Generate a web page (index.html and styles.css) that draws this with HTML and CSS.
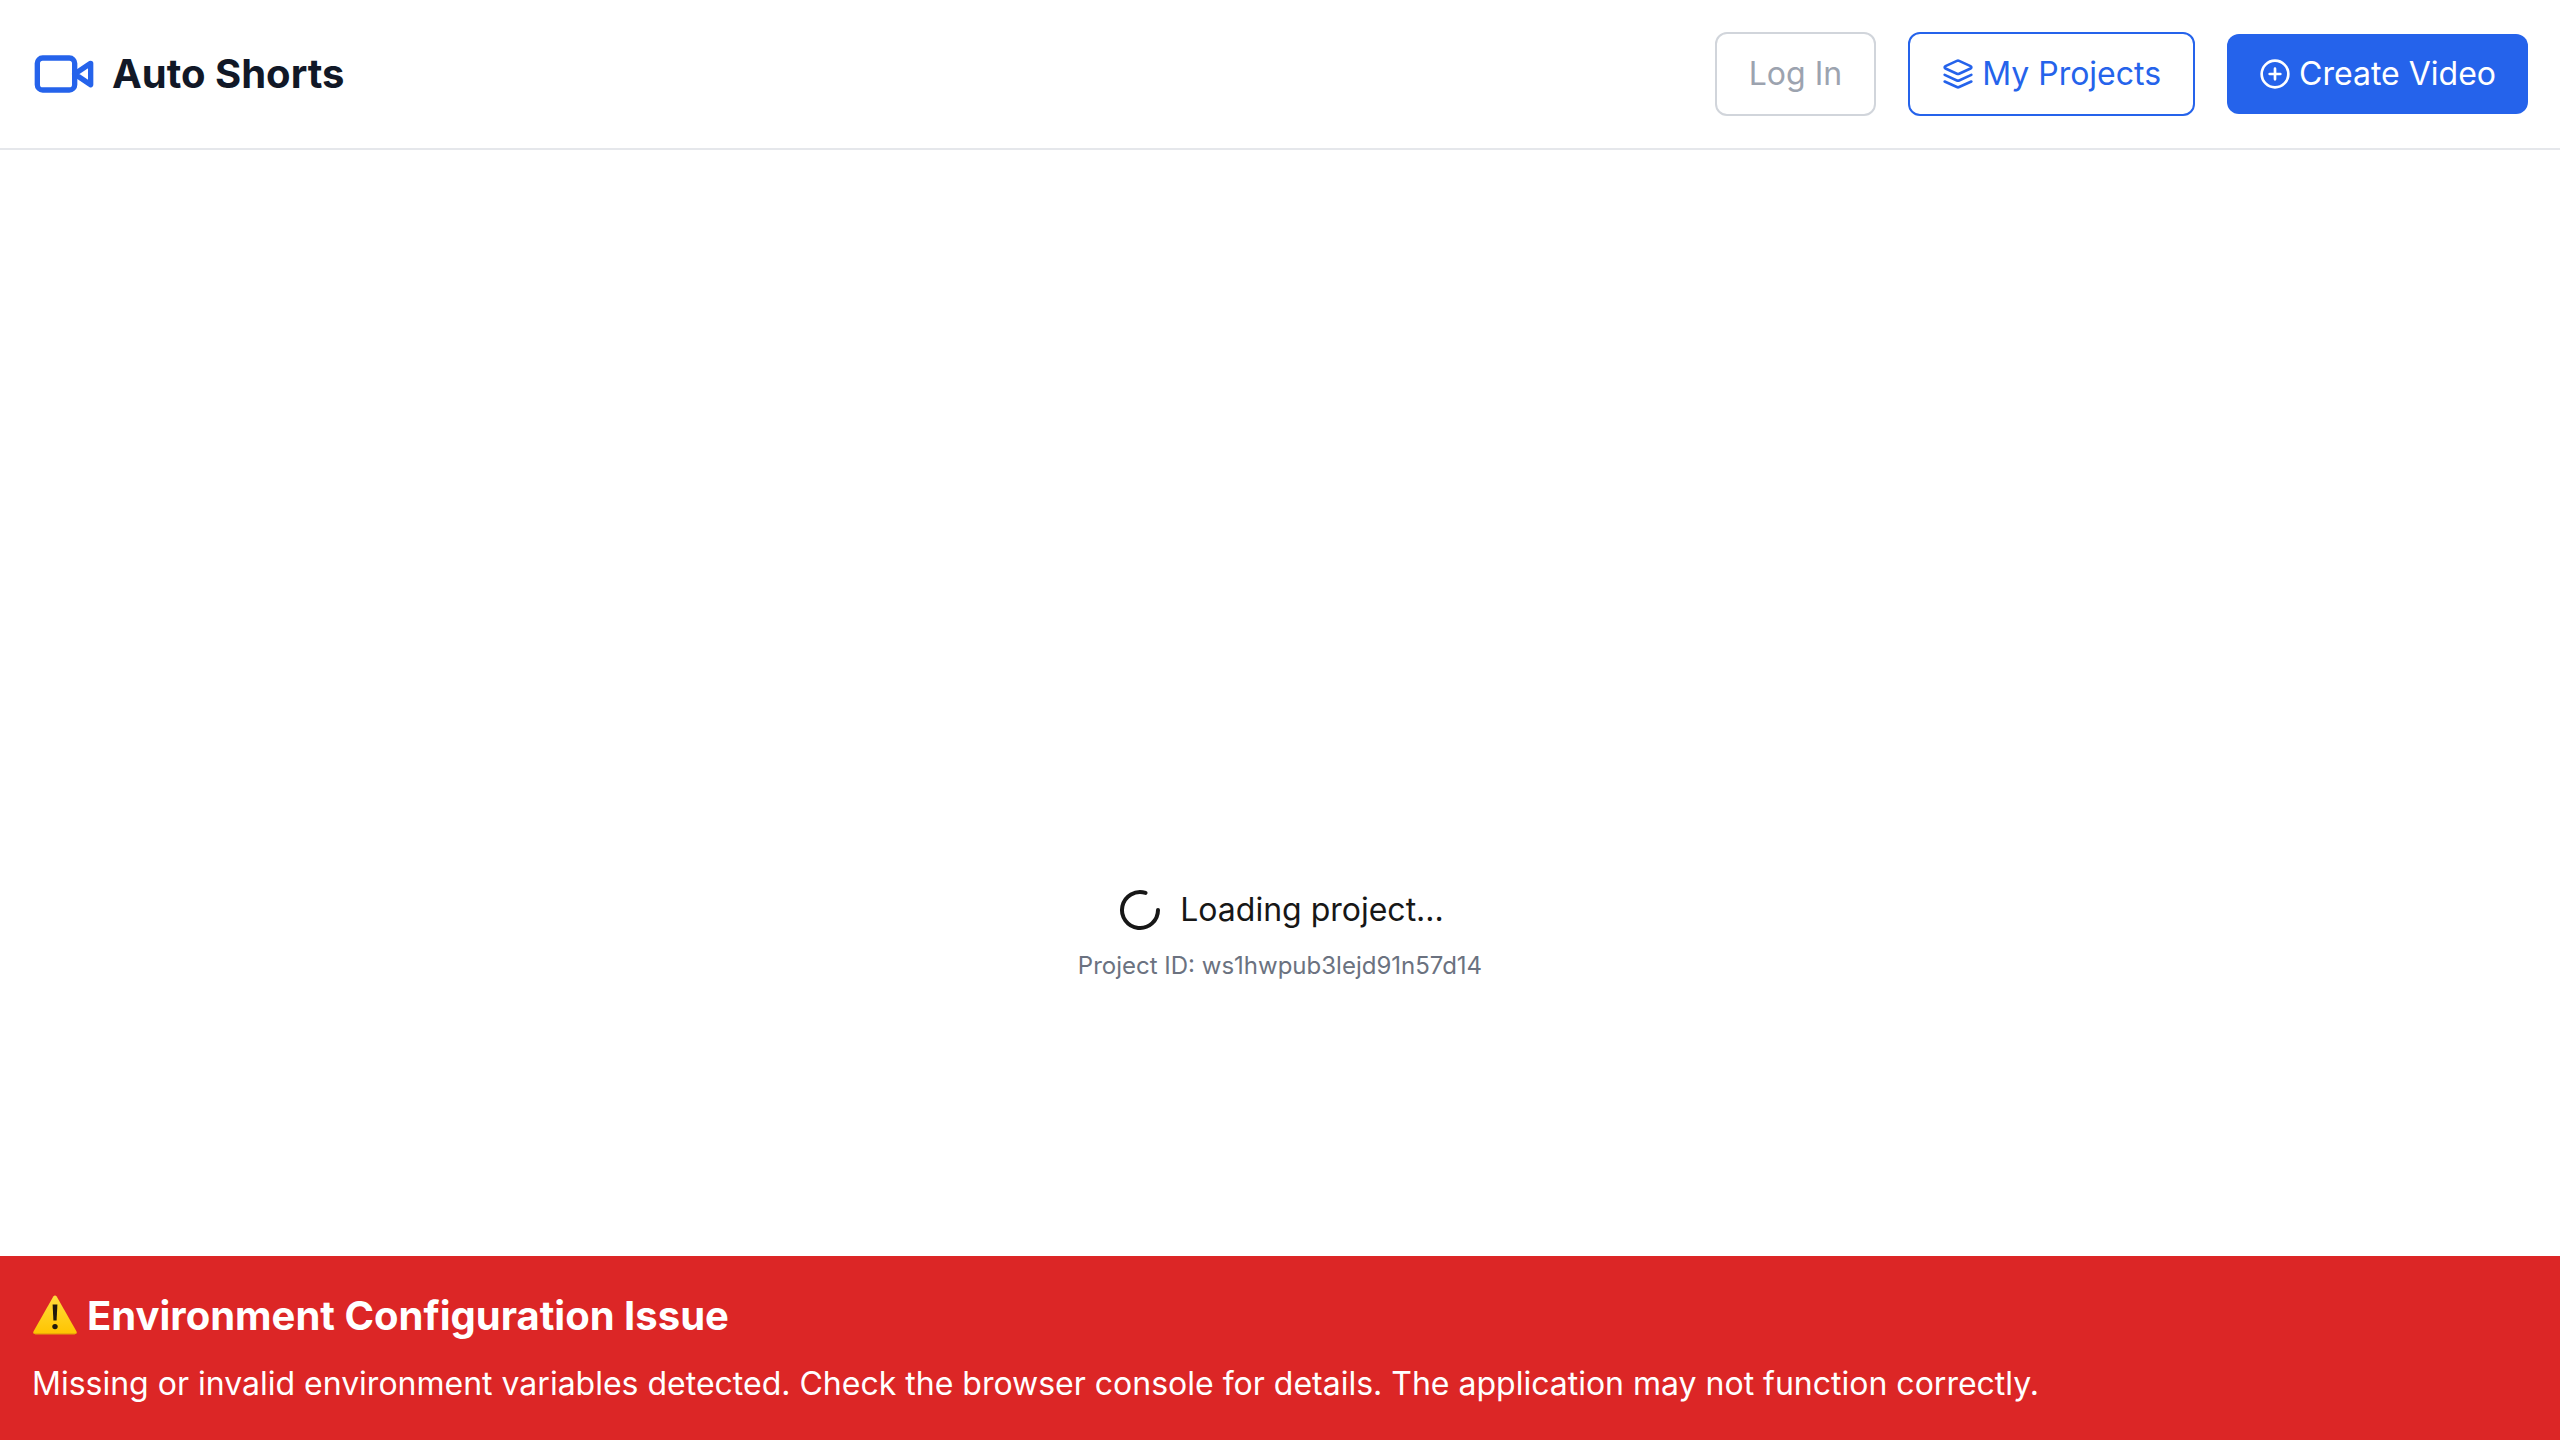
FILE: index.html
```html
<!DOCTYPE html>
<html lang="en">
<head>
<meta charset="utf-8">
<meta name="viewport" content="width=device-width, initial-scale=1">
<title>Auto Shorts</title>
<link rel="stylesheet" href="styles.css">
</head>
<body>
<div class="app">
  <header class="header">
    <a class="brand" href="#">
      <svg class="brand-icon" viewBox="0 0 24 24" aria-hidden="true"><path d="m22 8-6 4 6 4V8Z"/><rect x="2" y="6" width="14" height="12" rx="2"/></svg>
      <span>Auto Shorts</span>
    </a>
    <nav class="actions">
      <button class="button button-muted" type="button" disabled>Log In</button>
      <button class="button button-outline" type="button">
        <svg class="button-icon" viewBox="0 0 24 24" aria-hidden="true"><path d="m12.83 2.18a2 2 0 0 0-1.66 0L2.6 6.08a1 1 0 0 0 0 1.83l8.58 3.91a2 2 0 0 0 1.66 0l8.58-3.9a1 1 0 0 0 0-1.83Z"/><path d="m22 17.65-9.17 4.16a2 2 0 0 1-1.66 0L2 17.65"/><path d="m22 12.65-9.17 4.16a2 2 0 0 1-1.66 0L2 12.65"/></svg>
        My Projects
      </button>
      <button class="button button-primary" type="button">
        <svg class="button-icon" viewBox="0 0 24 24" aria-hidden="true"><circle cx="12" cy="12" r="10"/><path d="M8 12h8M12 8v8"/></svg>
        Create Video
      </button>
    </nav>
  </header>

  <main class="main">
    <div class="loading" role="status">
      <svg class="spinner" viewBox="0 0 24 24" aria-hidden="true"><path d="M21 12a9 9 0 1 1-6.219-8.56"/></svg>
      <span>Loading project...</span>
    </div>
    <p class="project-id">Project ID: ws1hwpub3lejd91n57d14</p>
  </main>

  <section class="banner" role="alert">
    <h2 class="banner-title">
      <svg class="warning" viewBox="-1 0 47 42" aria-hidden="true">
        <defs><linearGradient id="amber" x1="0" y1="0" x2="0" y2="1"><stop offset="0" stop-color="#ffdc3c"/><stop offset="1" stop-color="#ffc400"/></linearGradient></defs>
        <path d="M20.3 1.6Q22-.8 23.7 1.6L43.4 36.2Q44.6 39.2 41.8 39.2H2.2Q-.6 39.2.6 36.2Z" fill="url(#amber)"/>
        <path d="M.6 37.2Q.6 39.2 2.6 39.2H41.4Q43.4 39.2 43.4 37.2L42 38.2H2Z" fill="#e5a50a"/>
        <path d="M19.6 9.4h4.8l-.8 16h-3.2Z" fill="#20190c"/>
        <circle cx="22" cy="31.6" r="2.7" fill="#20190c"/>
      </svg>
      <span>Environment Configuration Issue</span>
    </h2>
    <p class="banner-text">Missing or invalid environment variables detected. Check the browser console for details. The application may not function correctly.</p>
  </section>
</div>
</body>
</html>
```
FILE: styles.css
```css
* {
  box-sizing: border-box;
}

body {
  margin: 0;
  background: #fff;
  color: #171717;
  font: 32px/48px Inter, "Liberation Sans", sans-serif;
}

h2,
p {
  margin: 0;
}

svg {
  flex: none;
  fill: none;
  stroke: currentColor;
  stroke-width: 2;
  stroke-linecap: round;
  stroke-linejoin: round;
}

.app {
  height: 100vh;
  overflow: hidden;
}

.header {
  display: flex;
  align-items: center;
  justify-content: space-between;
  padding: 32px;
  border-bottom: 2px solid #e5e7eb;
}

.brand {
  display: flex;
  align-items: center;
  gap: 16px;
  color: #111827;
  font-size: 40px;
  font-weight: 700;
  line-height: 56px;
  text-decoration: none;
}

.brand-icon {
  width: 64px;
  height: 64px;
  color: #2563eb;
}

.actions {
  display: flex;
  align-items: center;
  gap: 32px;
}

.button {
  display: flex;
  align-items: center;
  gap: 8px;
  padding: 16px 32px;
  border: 2px solid;
  border-radius: 12px;
  background: #fff;
  font: inherit;
}

.button-icon {
  width: 32px;
  height: 32px;
}

.button-muted {
  border-color: #d1d5db;
  color: #9ca3af;
}

.button-outline {
  border-color: #2563eb;
  color: #2563eb;
}

.button-primary {
  border: 0;
  background: #2563eb;
  color: #fff;
}

.main {
  display: flex;
  flex-direction: column;
  align-items: center;
  justify-content: center;
  gap: 16px;
  box-sizing: content-box;
  min-height: 100vh;
  padding: 64px;
}

.loading {
  display: flex;
  align-items: center;
  gap: 16px;
}

.spinner {
  width: 48px;
  height: 48px;
}

.project-id {
  color: #6b7280;
  font-size: 24px;
  line-height: 32px;
}

.banner {
  position: fixed;
  right: 0;
  bottom: 0;
  left: 0;
  padding: 32px;
  background: #dc2626;
  color: #fff;
}

.banner-title {
  display: flex;
  align-items: center;
  gap: 8px;
  margin-bottom: 16px;
  font-size: 40px;
  font-weight: 700;
  line-height: 56px;
}

.warning {
  width: 47px;
  height: 42px;
  stroke: none;
}
```
